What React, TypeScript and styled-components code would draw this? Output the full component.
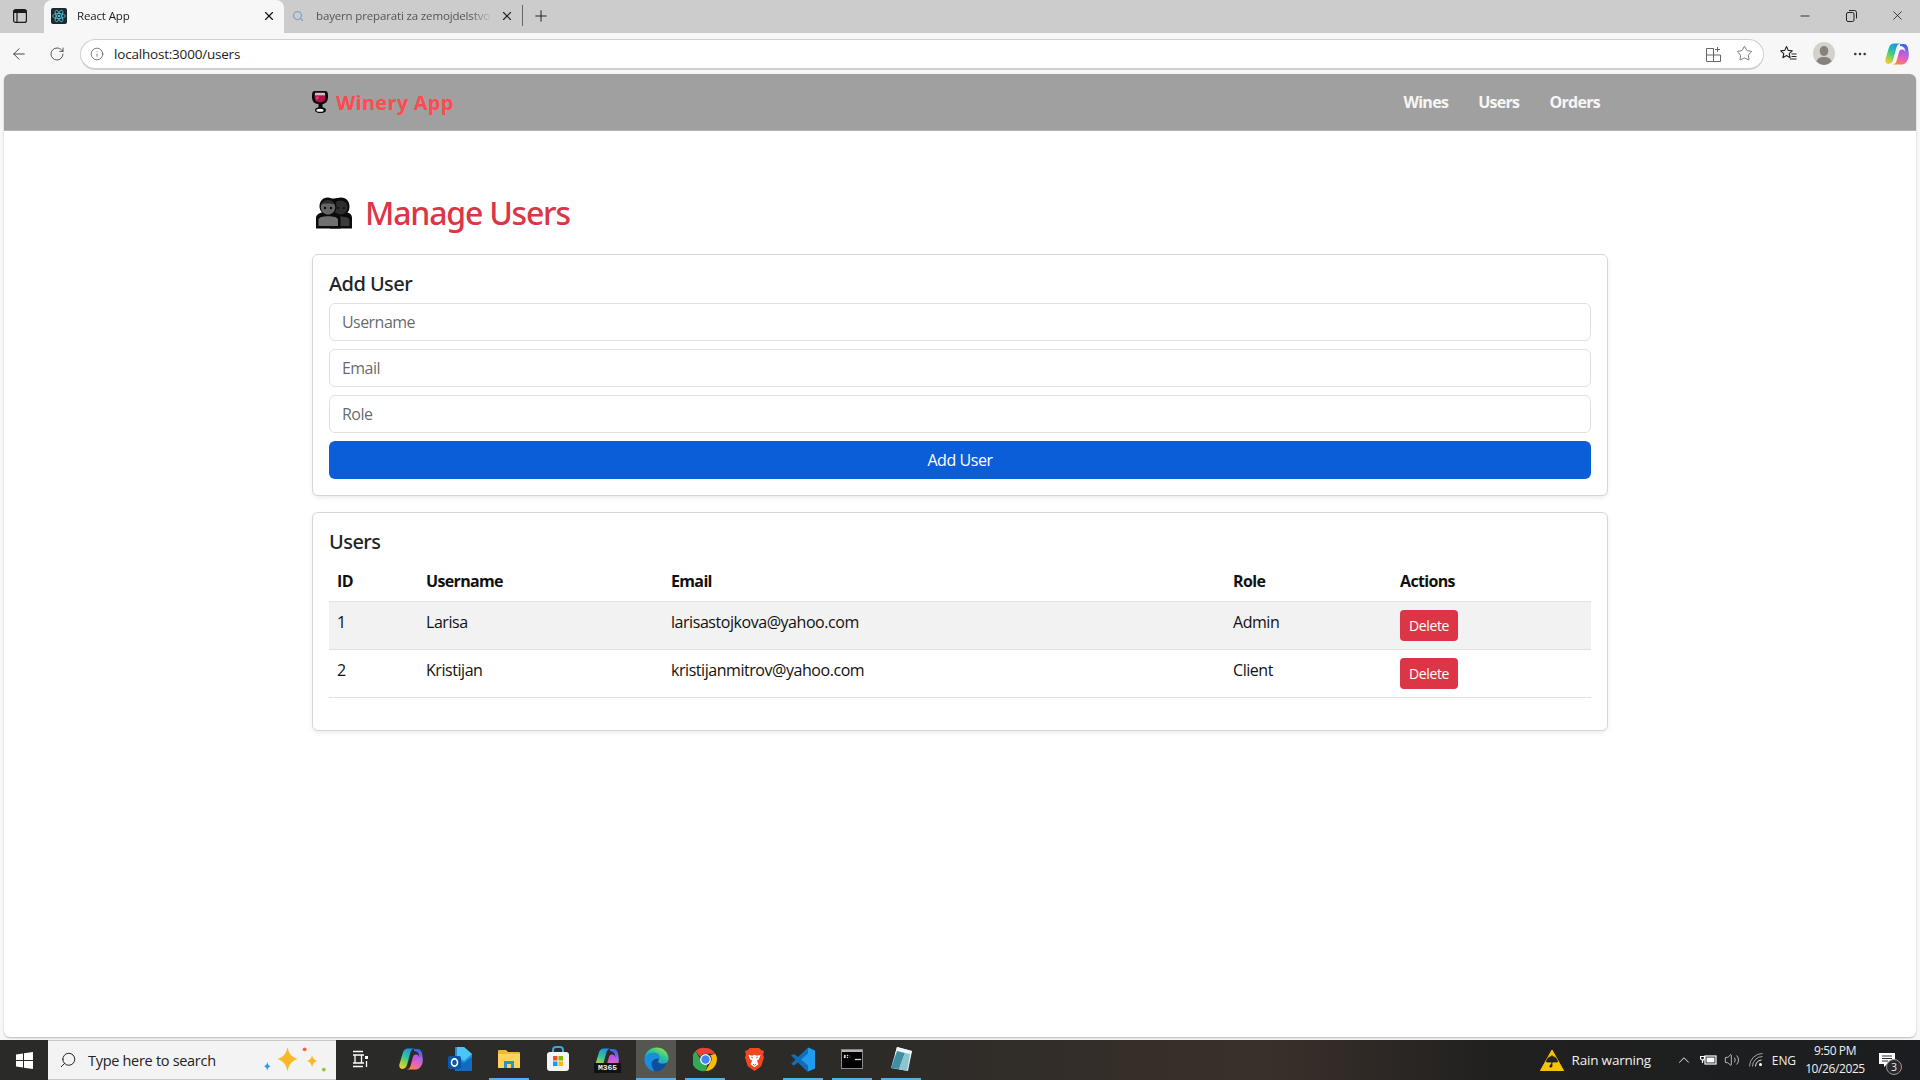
import React from "react";
import styled, { createGlobalStyle } from "styled-components";
import { ArrowLeft, RotateCw, Info, Plus, X, Minus, Star, MoreHorizontal, Search, ChevronUp, Volume2 } from "lucide-react";

const Global = createGlobalStyle`
  html, body { margin: 0; padding: 0; height: 100%; background: #f7f7f7; overflow: hidden; }
  #root { height: 100%; }
  * { box-sizing: border-box; }
`;

const FONT = `"Open Sans", "Noto Sans", "Liberation Sans", sans-serif`;
const HEAD_FONT = `"Noto Sans", "Open Sans", "Liberation Sans", sans-serif`;

const Shell = styled.div`
  height: 1080px; display: flex; flex-direction: column; font-family: ${FONT}; color: #212529;
`;
const TabStrip = styled.div`
  height: 33px; background: #cccccc; display: flex; align-items: stretch; flex-shrink: 0;
`;
const SideToggle = styled.div`
  width: 44px; display: flex; align-items: center; justify-content: center; padding-right: 5px; padding-bottom: 2px; color: #1a1a1a;
`;
const Tab = styled.div<{ $active?: boolean }>`
  width: ${(p) => (p.$active ? "240px" : "238px")};
  background: ${(p) => (p.$active ? "#f7f7f7" : "transparent")};
  border-radius: 8px 8px 0 0;
  display: flex; align-items: center;
  padding: 0 8px 2px ${(p) => (p.$active ? "7px" : "8px")};
  color: ${(p) => (p.$active ? "#1a1a1a" : "#555")};
  font-size: 11.5px; letter-spacing: -0.15px;
`;
const TabIconSlot = styled.span<{ $gap: number }>`
  display: flex; margin-right: ${(p) => p.$gap}px; flex-shrink: 0;
`;
const TabTitle = styled.span`
  flex: 1; white-space: nowrap; overflow: hidden; margin-right: 8px;
  -webkit-mask-image: linear-gradient(90deg, #000 88%, transparent);
  mask-image: linear-gradient(90deg, #000 88%, transparent);
`;
const TabSep = styled.div`
  width: 1px; height: 21px; background: #666; align-self: center; margin-bottom: 2px;
`;
const NewTab = styled.div`
  width: 36px; display: flex; align-items: center; justify-content: center; padding-bottom: 2px; color: #222;
`;
const StripFill = styled.div`flex: 1;`;
const WinControls = styled.div`
  display: flex; align-items: center; padding-bottom: 2px; color: #111;
`;
const WinBtn = styled.div`
  width: 46px; display: flex; justify-content: center;
`;
const Toolbar = styled.div`
  height: 41px; background: #f7f7f7; display: flex; align-items: center; flex-shrink: 0; color: #333;
`;
const NavBtn = styled.div<{ $w: number }>`
  width: ${(p) => p.$w}px; display: flex; justify-content: center; align-items: center; flex-shrink: 0;
`;
const Omnibox = styled.div`
  width: 1684px; height: 31px; flex-shrink: 0; margin-top: 1px; margin-left: 5px; margin-right: 3px;
  background: #fff; border: 1px solid #cfcfcf; border-bottom-width: 2px; border-radius: 16px;
  display: flex; align-items: center; padding: 0 4px 0 9px;
`;
const Url = styled.span`
  font-size: 13.5px; color: #222; margin-left: 10px; flex: 1; letter-spacing: -0.2px;
`;
const OmniIcon = styled.span<{ $w: number }>`
  width: ${(p) => p.$w}px; display: flex; justify-content: center; color: #555;
`;
const Viewport = styled.div`
  flex: 1; min-height: 0; margin: 0 4px 3px 4px; background: #fff;
  border-radius: 6px; box-shadow: 0 1px 2px rgba(0,0,0,.25); overflow: hidden;
`;
const Navbar = styled.nav`
  height: 57px; background: #a0a0a0; border-bottom: 1px solid #b4b4b4; display: flex; justify-content: center;
`;
const NavInner = styled.div`
  width: 1296px; display: flex; align-items: center; justify-content: space-between;
`;
const Brand = styled.div`
  display: flex; align-items: center; gap: 8px;
  font-size: 20px; font-weight: 700; color: #ff4a50; letter-spacing: 0.25px;
`;
const NavLinks = styled.div`
  display: flex; gap: 30px; padding-right: 8px; font-size: 16px; font-weight: 700; color: #f6f6f6; letter-spacing: -0.7px;
`;
const Main = styled.main`
  width: 1296px; margin: 0 auto; padding-top: 63px;
`;
const PageTitle = styled.h2`
  margin: 0 0 22px; font: 500 32px/38px ${HEAD_FONT}; color: #dc3545;
  display: flex; align-items: center; gap: 13px; padding-left: 4px; letter-spacing: -1.2px;
`;
const Card = styled.section`
  background: #fff; border: 1px solid #d6d6d6; border-radius: 6px; padding: 16px;
  margin-bottom: 16px; box-shadow: 0 2px 4px rgba(0,0,0,.075);
`;
const CardTitle = styled.h5`
  margin: 0 0 7px; padding-top: 1px; font: 500 20px/24px ${HEAD_FONT}; color: #212529; letter-spacing: -0.55px;
`;
const Field = styled.input`
  display: block; width: 100%; height: 38px; margin-bottom: 8px; padding: 6px 12px;
  border: 1px solid #dee2e6; border-radius: 6px; font: 400 16px ${FONT}; letter-spacing: -0.55px; outline: none;
  &::placeholder { color: rgba(33,37,41,.7); opacity: 1; }
`;
const PrimaryBtn = styled.button`
  display: block; width: 100%; height: 38px; border: 0; border-radius: 6px; background: #0b5ed7;
  color: #fff; font: 400 16px ${FONT}; letter-spacing: -0.45px;
`;
const Table = styled.table`
  width: 100%; border-collapse: collapse; table-layout: fixed; margin-bottom: 16px; color: #111;
`;
const Col = styled.col<{ $w: number }>`width: ${(p) => p.$w}px;`;
const Th = styled.th`
  height: 40px; padding: 8px; text-align: left; font-size: 16px; line-height: 24px; font-weight: 700;
  border-bottom: 1px solid #dee2e6; letter-spacing: -0.65px;
`;
const Tr = styled.tr<{ $striped?: boolean }>`
  background: ${(p) => (p.$striped ? "#f2f2f2" : "#fff")};
`;
const Td = styled.td`
  padding: 8px; vertical-align: top; font-size: 16px; line-height: 24px;
  border-bottom: 1px solid #dee2e6; letter-spacing: -0.45px;
`;
const DangerBtn = styled.button`
  display: block; width: 58px; height: 31px; padding: 0; border: 0; border-radius: 4px; background: #dc3545;
  color: #fff; font: 400 14px ${FONT}; letter-spacing: -0.4px;
`;
const Taskbar = styled.footer`
  height: 40px; flex-shrink: 0; display: flex; align-items: stretch; color: #fff;
  background: linear-gradient(90deg, #2a2a28 0%, #2c2b28 45%, #3a302a 66%, #20201f 78%, #1b1d20 100%);
`;
const StartBtn = styled.div`
  width: 48px; display: flex; align-items: center; justify-content: center;
`;
const SearchBox = styled.div`
  width: 288px; background: #f3f3f3; border-top: 1px solid #c9c9c9; border-bottom: 1px solid #c9c9c9;
  display: flex; align-items: center; padding: 0 9px 0 11px; color: #222;
  font-size: 14.5px; letter-spacing: -0.3px;
`;
const SearchText = styled.span`margin-left: 11px; flex: 1;`;
const AppRow = styled.div`
  display: flex; gap: 9px; padding-left: 6px;
`;
const AppCell = styled.div<{ $open?: boolean; $active?: boolean }>`
  width: 40px; position: relative; display: flex; align-items: center; justify-content: center;
  background: ${(p) => (p.$active ? "#55564f" : "transparent")};
  border-bottom: 2px solid ${(p) => (p.$open ? "#5aaee8" : "transparent")};
`;
const Tray = styled.div`
  margin-left: auto; display: flex; align-items: center; font-size: 12px; color: #f0f0f0; letter-spacing: -0.1px;
`;
const TrayWarn = styled.div`
  display: flex; align-items: center; gap: 8px; font-size: 13.5px; margin-right: 21px; letter-spacing: -0.2px;
`;
const TraySlot = styled.div`
  width: 24px; display: flex; justify-content: center; align-items: center;
`;
const TrayLang = styled.div`
  width: 28px; text-align: right;
`;
const Clock = styled.div`
  width: 78px; text-align: center; font-size: 12px; line-height: 18px; letter-spacing: -0.4px;
`;
const Notif = styled.div`
  width: 44px; position: relative; display: flex; justify-content: center; align-items: center; margin-left: 2px; padding-right: 22px;
`;
const Badge = styled.span`
  position: absolute; left: 10px; top: 7px; width: 16px; height: 16px; border-radius: 50%;
  border: 1px solid #999; background: #2a2a2a; font-size: 10.5px; line-height: 14px; text-align: center; color: #eee;
`;

const ReactFav = () => (
  <svg width="16" height="16" viewBox="0 0 16 16">
    <rect width="16" height="16" rx="2" fill="#20282e" />
    <g fill="none" stroke="#4fc6dd" strokeWidth=".8">
      <ellipse cx="8" cy="8" rx="6.4" ry="2.5" />
      <ellipse cx="8" cy="8" rx="6.4" ry="2.5" transform="rotate(60 8 8)" />
      <ellipse cx="8" cy="8" rx="6.4" ry="2.5" transform="rotate(120 8 8)" />
    </g>
    <circle cx="8" cy="8" r="1.3" fill="#4fc6dd" />
  </svg>
);

const CopilotLogo = ({ id, size }: { id: string; size: number }) => (
  <svg width={size} height={size} viewBox="0 0 24 24">
    <defs>
      <linearGradient id={`${id}a`} x1="0.7" y1="0" x2="0.3" y2="1">
        <stop offset="0" stopColor="#1f8ff0" />
        <stop offset=".45" stopColor="#2fc59a" />
        <stop offset=".8" stopColor="#a8d43c" />
        <stop offset="1" stopColor="#f6c93a" />
      </linearGradient>
      <linearGradient id={`${id}b`} x1="0.7" y1="0" x2="0.3" y2="1">
        <stop offset="0" stopColor="#2d63e8" />
        <stop offset=".35" stopColor="#a866ec" />
        <stop offset=".7" stopColor="#f062b0" />
        <stop offset="1" stopColor="#fb8a3c" />
      </linearGradient>
    </defs>
    <path d="M9 1.500h6.500c-2.500.5-3.500 2-4.200 4.500l-3 11c-.7 2.800-2 5-4.800 5-2.500 0-3.800-2.200-3-5L3.800 6C4.700 3 6.200 1.500 9 1.500z" fill={`url(#${id}a)`} />
    <path d="M15 2h3.500c2.500 0 3.800 1.500 4.500 4l.8 6c.3 3.500-1 6.500-2.800 8.500-1.200 1.400-2.800 2-5 2H7.500c2.800-.3 3.700-2.300 4.400-4.800l2.100-7.700c.5-1.800 1.700-2.600 3-2.500 2.200 0 2.700 1.700 3.300 3 .2-3.500-1.300-6.200-5.300-6.500z" fill={`url(#${id}b)`} />
    <path d="M15 8.500c1-1 3-1 4.500 0l1 2.500-3.500 1.500c-2 1-3 2.500-3.800 4.500z" fill="#c64ee0" opacity=".7" />
  </svg>
);

const WineGlass = () => (
  <svg width="16" height="22" viewBox="0 0 16 22">
    <path d="M2.500 0h11c1.200 0 2 .8 2.200 2 .5 3 .5 6-.5 8-1 1.800-2.500 2.700-4.700 3v3.200c2 .4 3.500 1.300 3.500 3 0 1.900-2.500 2.800-5.500 2.800s-5.500-.9-5.500-2.800c0-1.700 1.500-2.600 3.500-3V13C3.300 12.700 1.800 11.800.8 10-.2 8-.2 5 .3 2 .5.800 1.300 0 2.500 0z" fill="#0b0b0b" />
    <path d="M3.200 1.800h9.600c.3 1 .4 2 .4 3H2.800c0-1 .1-2 .4-3z" fill="#d0c0c8" />
    <path d="M2.600 4.600h10.800c.2 2-.1 3.600-.7 4.700-.8 1.400-2.500 2.100-4.700 2.100s-3.900-.7-4.700-2.100c-.6-1.100-.9-2.700-.7-4.700z" fill="#b3124f" />
    <path d="M4 5.500h3c-.5 1.800-1 3-2.200 3.500C4 8 3.900 7 4 5.500z" fill="#e83f78" />
    <ellipse cx="8" cy="19.200" rx="3.600" ry="1.500" fill="#f4f4f4" />
  </svg>
);

const PeopleIcon = () => (
  <svg width="36" height="32" viewBox="0 0 36 32">
    <path d="M25 .5c5.500 0 8.500 4 8.500 9 0 2.500-.7 4.500-2 6 3 .7 4.500 2.500 4.500 5.500v10.500H14V2z" fill="#0b0b0b" />
    <circle cx="24.500" cy="10.500" r="7" fill="#2e2e2e" />
    <path d="M18 29V23c0-2.500 3-3.500 6.500-3.500S33.500 20.500 33.500 23v6z" fill="#3b3b3b" />
    <path d="M11.500.5c5.500 0 9 4 9 9 0 2.500-.7 4.500-2 6 3.500.8 6 2.500 6 5.500v10.500H0V21c0-3 2.500-4.700 6-5.500-1.300-1.500-2.500-3.500-2.500-6 0-5 3-9 8-9z" fill="#0b0b0b" />
    <circle cx="12" cy="10.500" r="7.200" fill="#666" />
    <path d="M5 7c2-3 5-4 7-4 3.500 0 6 2 6.800 4.500C16 6.500 9 6 5 7z" fill="#2b2b2b" />
    <path d="M2.500 29V23c0-2.800 4.500-3.700 9.500-3.700s10 .9 10 3.700v6z" fill="#707070" />
    <circle cx="9" cy="11" r="1.200" fill="#0b0b0b" /><circle cx="15" cy="11" r="1.200" fill="#0b0b0b" />
    <circle cx="22" cy="11" r="1" fill="#0b0b0b" /><circle cx="28" cy="11" r="1" fill="#0b0b0b" />
  </svg>
);

const Sparkles = () => (
  <svg width="64" height="29" viewBox="0 0 60 27">
    <path d="M23 1c1.500 6.500 4 9 9.500 11-5.500 2-8 4.500-9.500 11.500C21.500 16.500 19 14 13.500 12 19 10 21.500 7.500 23 1z" fill="#fbb826" />
    <path d="M46 8.500c.7 3 1.800 4.200 4.500 5.500-2.700 1.300-3.800 2.500-4.500 5.800-.7-3.300-1.800-4.500-4.500-5.800 2.700-1.300 3.800-2.500 4.500-5.500z" fill="#fbb826" />
    <path d="M4 15c.5 2.300 1.200 3 3 3.800-1.800.8-2.500 1.500-3 4.200-.5-2.700-1.200-3.400-3-4.200 1.800-.8 2.500-1.500 3-3.800z" fill="#2a9df0" />
    <circle cx="39" cy="3" r="1.800" fill="#f0663a" /><circle cx="57" cy="22" r="1.800" fill="#8cc63f" />
  </svg>
);

const WinLogo = () => (
  <svg width="17" height="17" viewBox="0 0 17 17" fill="#fff">
    <path d="M0 2.400 7 1.400V8H0zM8 1.300 17 0v8H8zM0 9h7v6.600L0 14.600zM8 9h9v8l-9-1.300z" />
  </svg>
);
const TaskView = () => (
  <svg width="16" height="18" viewBox="0 0 16 18" fill="none" stroke="#fff" strokeWidth="1.300" style={{ marginRight: 4 }}>
    <path d="M1 1.500h10M1 16.500h10M3 5h6.500v8H3zM1 5h11M1 13h11" /><rect x="13" y="6" width="3" height="3" fill="#fff" stroke="none" /><path d="M14.500 11v6" />
  </svg>
);
const Outlook = () => (
  <svg width="24" height="26" viewBox="0 0 24 26">
    <path d="M7 1h9l8 7v15a2 2 0 0 1-2 2H7z" fill="#1a8fe0" />
    <path d="M9 1h7l8 7-8 7-7-5z" fill="#4cc4f4" />
    <path d="M9 14l7 3 8-6v12a2 2 0 0 1-2 2H7z" fill="#0f6cc0" />
    <rect x="0" y="10" width="13" height="13" rx="2" fill="#0b55a8" />
    <ellipse cx="6.500" cy="16.500" rx="3" ry="3.600" fill="none" stroke="#fff" strokeWidth="1.600" />
  </svg>
);
const Explorer = () => (
  <svg width="22" height="20" viewBox="0 0 22 20">
    <path d="M0 2a1 1 0 0 1 1-1h7l2 2h11a1 1 0 0 1 1 1v14a1 1 0 0 1-1 1H1a1 1 0 0 1-1-1z" fill="#f2b92c" />
    <path d="M0 5h22v13a1 1 0 0 1-1 1H1a1 1 0 0 1-1-1z" fill="#fbd65a" />
    <path d="M6 12h10v7H6z" fill="#2c8fd8" /><path d="M9 15h4v4H9z" fill="#f4d264" />
  </svg>
);
const Store = () => (
  <svg width="24" height="26" viewBox="0 0 24 26">
    <path d="M7 7V4a3 3 0 0 1 3-3h4a3 3 0 0 1 3 3v3" fill="none" stroke="#35a8e8" strokeWidth="2" />
    <rect x="1" y="6" width="22" height="19" rx="3" fill="#f4f4f4" />
    <rect x="7" y="10" width="4.500" height="4.500" fill="#f25022" /><rect x="12.500" y="10" width="4.500" height="4.500" fill="#7fba00" />
    <rect x="7" y="15.500" width="4.500" height="4.500" fill="#00a4ef" /><rect x="12.500" y="15.500" width="4.500" height="4.500" fill="#ffb900" />
  </svg>
);
const M365Badge = styled.span`
  position: absolute; bottom: 5px; left: 7px; width: 27px; height: 10px; background: #111; color: #eee;
  font: 700 8px/10px "Liberation Mono", monospace; text-align: center;
`;
const EdgeLogo = () => (
  <svg width="25" height="25" viewBox="0 0 26 26">
    <defs>
      <linearGradient id="edgeA" x1="0.9" y1="0.2" x2="0.4" y2="0.9"><stop offset="0" stopColor="#7be05a" /><stop offset=".5" stopColor="#25c2a0" /><stop offset="1" stopColor="#1a9ee0" /></linearGradient>
    </defs>
    <path d="M.5 13C.5 6 6 .5 13 .5c7 0 12.500 5 12.500 11.500 0 3.500-3 5.500-6 5.500-2.800 0-5-1.200-5-2.500 0-1 1.500-1.500 1.500-4 0-3.500-3-5-5.500-5C6 6 1 9 .5 13z" fill="url(#edgeA)" />
    <path d="M.5 13c0-4 5-7 10-7 2.500 0 5.500 1.500 5.500 5 0 .7-.2 1.200-.4 1.600-3-1-7.600 1-7.600 5.400 0 3.500 3 6.200 6.500 7.500C6.500 26 .5 20.500.5 13z" fill="#1b8ddc" />
    <path d="M8 18c0-4.400 4.600-6.400 7.600-5.400-.8 1-1.100 1.500-1.100 2.400 0 1.300 2.200 2.500 5 2.500 1.500 0 3-.5 4-1.500-1.500 5-5.500 9.500-11.500 9.500-.5 0-1 0-1.500-.1C11 24.200 8 21.500 8 18z" fill="#0c4f9e" />
  </svg>
);
const ChromeLogo = () => (
  <svg width="25" height="25" viewBox="0 0 48 48">
    <path d="M24 2a22 22 0 0 1 19 11H24a11 11 0 0 0-10 6L5 8A22 22 0 0 1 24 2z" fill="#ea4335" />
    <path d="M43 13a22 22 0 0 1-19 33l10-17a11 11 0 0 0-1-13z" fill="#fbbc04" />
    <path d="M5 8l10 17a11 11 0 0 0 13 9l-4 12A22 22 0 0 1 5 8z" fill="#34a853" />
    <circle cx="24" cy="24" r="10.500" fill="#fff" /><circle cx="24" cy="24" r="8" fill="#4285f4" />
  </svg>
);
const BraveLogo = () => (
  <svg width="21" height="25" viewBox="0 0 22 26">
    <path d="M6 1h10l2 2 3 1-1 4 1 3-3 9-7 5-7-5-3-9 1-3-1-4 3-1z" fill="#f1461e" />
    <path d="M4.500 8l4 1 2.500-1 2.500 1 4-1-2 5-2 1 1.500 4-4 3-4-3 1.500-4-2-1z" fill="#fff" />
    <path d="M7.500 10.500l2 1M14.500 10.500l-2 1M9.500 18l1.500 1 1.500-1" stroke="#f1461e" strokeWidth="1" fill="none" />
  </svg>
);
const VSCode = () => (
  <svg width="24" height="25" viewBox="0 0 24 25">
    <path d="M17 .500 24 3.500v18l-7 3-10-9.500z" fill="#1f9cf0" />
    <path d="M17 .5 7 10l-4-3-3 1.500 4.500 4L0 17l3 1.500 4-3 10 9.500V18.500L10 12.500l7-6z" fill="#0e6fb8" />
  </svg>
);
const Cmd = () => (
  <svg width="22" height="20" viewBox="0 0 22 20">
    <rect x=".5" y=".5" width="21" height="19" fill="#000" stroke="#8a8a8a" />
    <rect x="1" y="1" width="20" height="2" fill="#b5b5b5" />
    <path d="M3 6h1.500v3H3zM6 6h1v1H6zM6 8h1v1H6zM8 6l1.500 3M14 10h6v1h-6z" fill="#ddd" stroke="#ddd" strokeWidth=".3" />
  </svg>
);
const Notepad = () => (
  <svg width="24" height="26" viewBox="0 0 24 26">
    <path d="M8 1l15 4-4 20L2 22z" fill="#d8eef2" />
    <path d="M8 1l15 4-2 7L6 8z" fill="#eef7f8" />
    <path d="M2 22 8 5l8 2-6 16z" fill="#3f8fa3" />
    <path d="M10 23l6-16 5 1-3 17z" fill="#8cc4cf" />
  </svg>
);
const AppsPlus = () => (
  <svg width="15" height="16" viewBox="0 0 15 16" fill="none" stroke="#666" strokeWidth="1">
    <path d="M.5 2.500h7v13h-7zM.5 9h14v6.500h-7M7.500 9V2.500M11.500 1v5M9 3.500h5" />
  </svg>
);
const FavLines = () => (
  <svg width="17" height="17" viewBox="0 0 17 17" fill="none" stroke="#222" strokeWidth="1.100">
    <path d="M6.500 1.500l1.700 3.900 4.100.4-3.100 2.800.9 4.100-3.600-2.200-3.600 2.200.9-4.100L.7 5.800l4.100-.4z" strokeLinejoin="round" />
    <path d="M11.500 9h5M11.500 11.500h5M10 14h6.500" />
  </svg>
);
const Avatar = () => (
  <svg width="22" height="23" viewBox="0 0 22 23">
    <ellipse cx="11" cy="11.500" rx="11" ry="11.500" fill="#d3d1cb" />
    <ellipse cx="11" cy="9" rx="4.300" ry="5" fill="#85817c" />
    <path d="M3.500 19.500c1-3.500 4-4.500 7.500-4.500s6.500 1 7.500 4.500A11 11 0 0 1 11 23a11 11 0 0 1-7.500-3.500z" fill="#85817c" />
  </svg>
);
const RestoreIcon = () => (
  <svg width="11" height="12" viewBox="0 0 11 12" fill="none" stroke="#222" strokeWidth="1">
    <rect x=".5" y="2.500" width="7.500" height="9" rx="1.500" /><path d="M3 .5h5.500a2 2 0 0 1 2 2v6" />
  </svg>
);
const RainWarn = () => (
  <svg width="24" height="22" viewBox="0 0 24 22">
    <path d="M12 1l11.500 20.500H.5z" fill="#f6c400" stroke="#f6c400" strokeLinejoin="round" />
    <path d="M6.500 13a5.500 5.500 0 0 1 11 0zM12 13v4a1.200 1.200 0 0 1-2.400 0M12 6v1.500" fill="#222" stroke="#222" strokeWidth=".8" />
  </svg>
);
const Battery = () => (
  <svg width="17" height="12" viewBox="0 0 17 12" fill="none" stroke="#fff" strokeWidth="1.200">
    <rect x="5" y="2" width="11" height="8" /><rect x="6.500" y="3.500" width="8" height="5" fill="#fff" stroke="none" />
    <path d="M4.500 6H2.500a2 2 0 0 1-2-2V2.500h4V4a2 2 0 0 1-2 2v3" />
  </svg>
);
const WifiIcon = () => (
  <svg width="14" height="14" viewBox="0 0 14 14" fill="none" stroke="#ddd" strokeWidth="1">
    <path d="M.5 13.500A13 13 0 0 1 13.500.5M3.500 13.500A10 10 0 0 1 13.500 3.500" opacity=".7" /><path d="M6.500 13.500a7 7 0 0 1 6-6.500" /><circle cx="11.500" cy="11.500" r="1.500" fill="#fff" stroke="none" />
  </svg>
);
const NotifIcon = () => (
  <svg width="16" height="16" viewBox="0 0 16 16" fill="#fff">
    <path d="M0 1h16v11H8l-3 3v-3H0z" />
    <path d="M3 4h10M3 6.500h10M3 9h6" stroke="#2a2a2a" strokeWidth="1" />
  </svg>
);

const users = [
  { id: 1, username: "Larisa", email: "larisastojkova@yahoo.com", role: "Admin" },
  { id: 2, username: "Kristijan", email: "kristijanmitrov@yahoo.com", role: "Client" },
];

export default function App() {
  return (
    <Shell>
      <Global />
      <TabStrip>
        <SideToggle>
          <svg width="14" height="14" viewBox="0 0 14 14" fill="none" stroke="#1a1a1a" strokeWidth="1.200">
            <rect x=".6" y=".6" width="12.800" height="12.800" rx="2" /><path d="M.6 3.500h12.800M4 3.500v9.800" />
            <rect x="1" y="1" width="12" height="2.500" fill="#1a1a1a" stroke="none" />
          </svg>
        </SideToggle>
        <Tab $active>
          <TabIconSlot $gap={10}><ReactFav /></TabIconSlot>
          <TabTitle>React App</TabTitle>
          <X size={14} color="#111" />
        </Tab>
        <Tab>
          <TabIconSlot $gap={12}><Search size={12} color="#7ba7cc" strokeWidth={2.500} /></TabIconSlot>
          <TabTitle>bayern preparati za zemojdelstvo</TabTitle>
          <X size={14} color="#222" />
        </Tab>
        <TabSep />
        <NewTab><Plus size={18} strokeWidth={1.300} /></NewTab>
        <StripFill />
        <WinControls>
          <WinBtn><Minus size={14} strokeWidth={1.400} /></WinBtn>
          <WinBtn><RestoreIcon /></WinBtn>
          <WinBtn><X size={15} strokeWidth={1.200} /></WinBtn>
        </WinControls>
      </TabStrip>
      <Toolbar>
        <NavBtn $w={38}><ArrowLeft size={18} strokeWidth={1.200} /></NavBtn>
        <NavBtn $w={37}><RotateCw size={16} strokeWidth={1.200} /></NavBtn>
        <Omnibox>
          <Info size={14} strokeWidth={1.300} color="#555" />
          <Url>localhost:3000/users</Url>
          <OmniIcon $w={32}><AppsPlus /></OmniIcon>
          <OmniIcon $w={30}><Star size={17} strokeWidth={1.100} /></OmniIcon>
        </Omnibox>
        <NavBtn $w={42}><FavLines /></NavBtn>
        <NavBtn $w={30}><Avatar /></NavBtn>
        <NavBtn $w={42}><MoreHorizontal size={16} strokeWidth={1.800} /></NavBtn>
        <NavBtn $w={32}><CopilotLogo id="cpA" size={24} /></NavBtn>
      </Toolbar>
      <Viewport>
        <Navbar>
          <NavInner>
            <Brand><WineGlass />Winery App</Brand>
            <NavLinks><span>Wines</span><span>Users</span><span>Orders</span></NavLinks>
          </NavInner>
        </Navbar>
        <Main>
          <PageTitle><PeopleIcon />Manage Users</PageTitle>
          <Card>
            <CardTitle>Add User</CardTitle>
            <Field placeholder="Username" />
            <Field placeholder="Email" />
            <Field placeholder="Role" />
            <PrimaryBtn>Add User</PrimaryBtn>
          </Card>
          <Card>
            <CardTitle>Users</CardTitle>
            <Table>
              <colgroup>
                <Col $w={89} /><Col $w={245} /><Col $w={562} /><Col $w={167} /><Col $w={199} />
              </colgroup>
              <thead>
                <tr><Th>ID</Th><Th>Username</Th><Th>Email</Th><Th>Role</Th><Th>Actions</Th></tr>
              </thead>
              <tbody>
                {users.map((u, i) => (
                  <Tr key={u.id} $striped={i === 0}>
                    <Td>{u.id}</Td><Td>{u.username}</Td><Td>{u.email}</Td><Td>{u.role}</Td>
                    <Td><DangerBtn>Delete</DangerBtn></Td>
                  </Tr>
                ))}
              </tbody>
            </Table>
          </Card>
        </Main>
      </Viewport>
      <Taskbar>
        <StartBtn><WinLogo /></StartBtn>
        <SearchBox>
          <Search size={18} strokeWidth={1.300} color="#222" style={{ transform: "scaleX(-1)" }} />
          <SearchText>Type here to search</SearchText>
          <Sparkles />
        </SearchBox>
        <AppRow>
          <AppCell><TaskView /></AppCell>
          <AppCell><CopilotLogo id="cpB" size={24} /></AppCell>
          <AppCell><Outlook /></AppCell>
          <AppCell $open><Explorer /></AppCell>
          <AppCell><Store /></AppCell>
          <AppCell><CopilotLogo id="cpC" size={24} /><M365Badge>M365</M365Badge></AppCell>
          <AppCell $open $active><EdgeLogo /></AppCell>
          <AppCell $open><ChromeLogo /></AppCell>
          <AppCell><BraveLogo /></AppCell>
          <AppCell $open><VSCode /></AppCell>
          <AppCell $open><Cmd /></AppCell>
          <AppCell $open><Notepad /></AppCell>
        </AppRow>
        <Tray>
          <TrayWarn><RainWarn />Rain warning</TrayWarn>
          <TraySlot><ChevronUp size={18} strokeWidth={1.300} /></TraySlot>
          <TraySlot><Battery /></TraySlot>
          <TraySlot><Volume2 size={16} strokeWidth={1.100} /></TraySlot>
          <TraySlot><WifiIcon /></TraySlot>
          <TrayLang>ENG</TrayLang>
          <Clock>9:50 PM<br />10/26/2025</Clock>
          <Notif><NotifIcon /><Badge>3</Badge></Notif>
        </Tray>
      </Taskbar>
    </Shell>
  );
}
